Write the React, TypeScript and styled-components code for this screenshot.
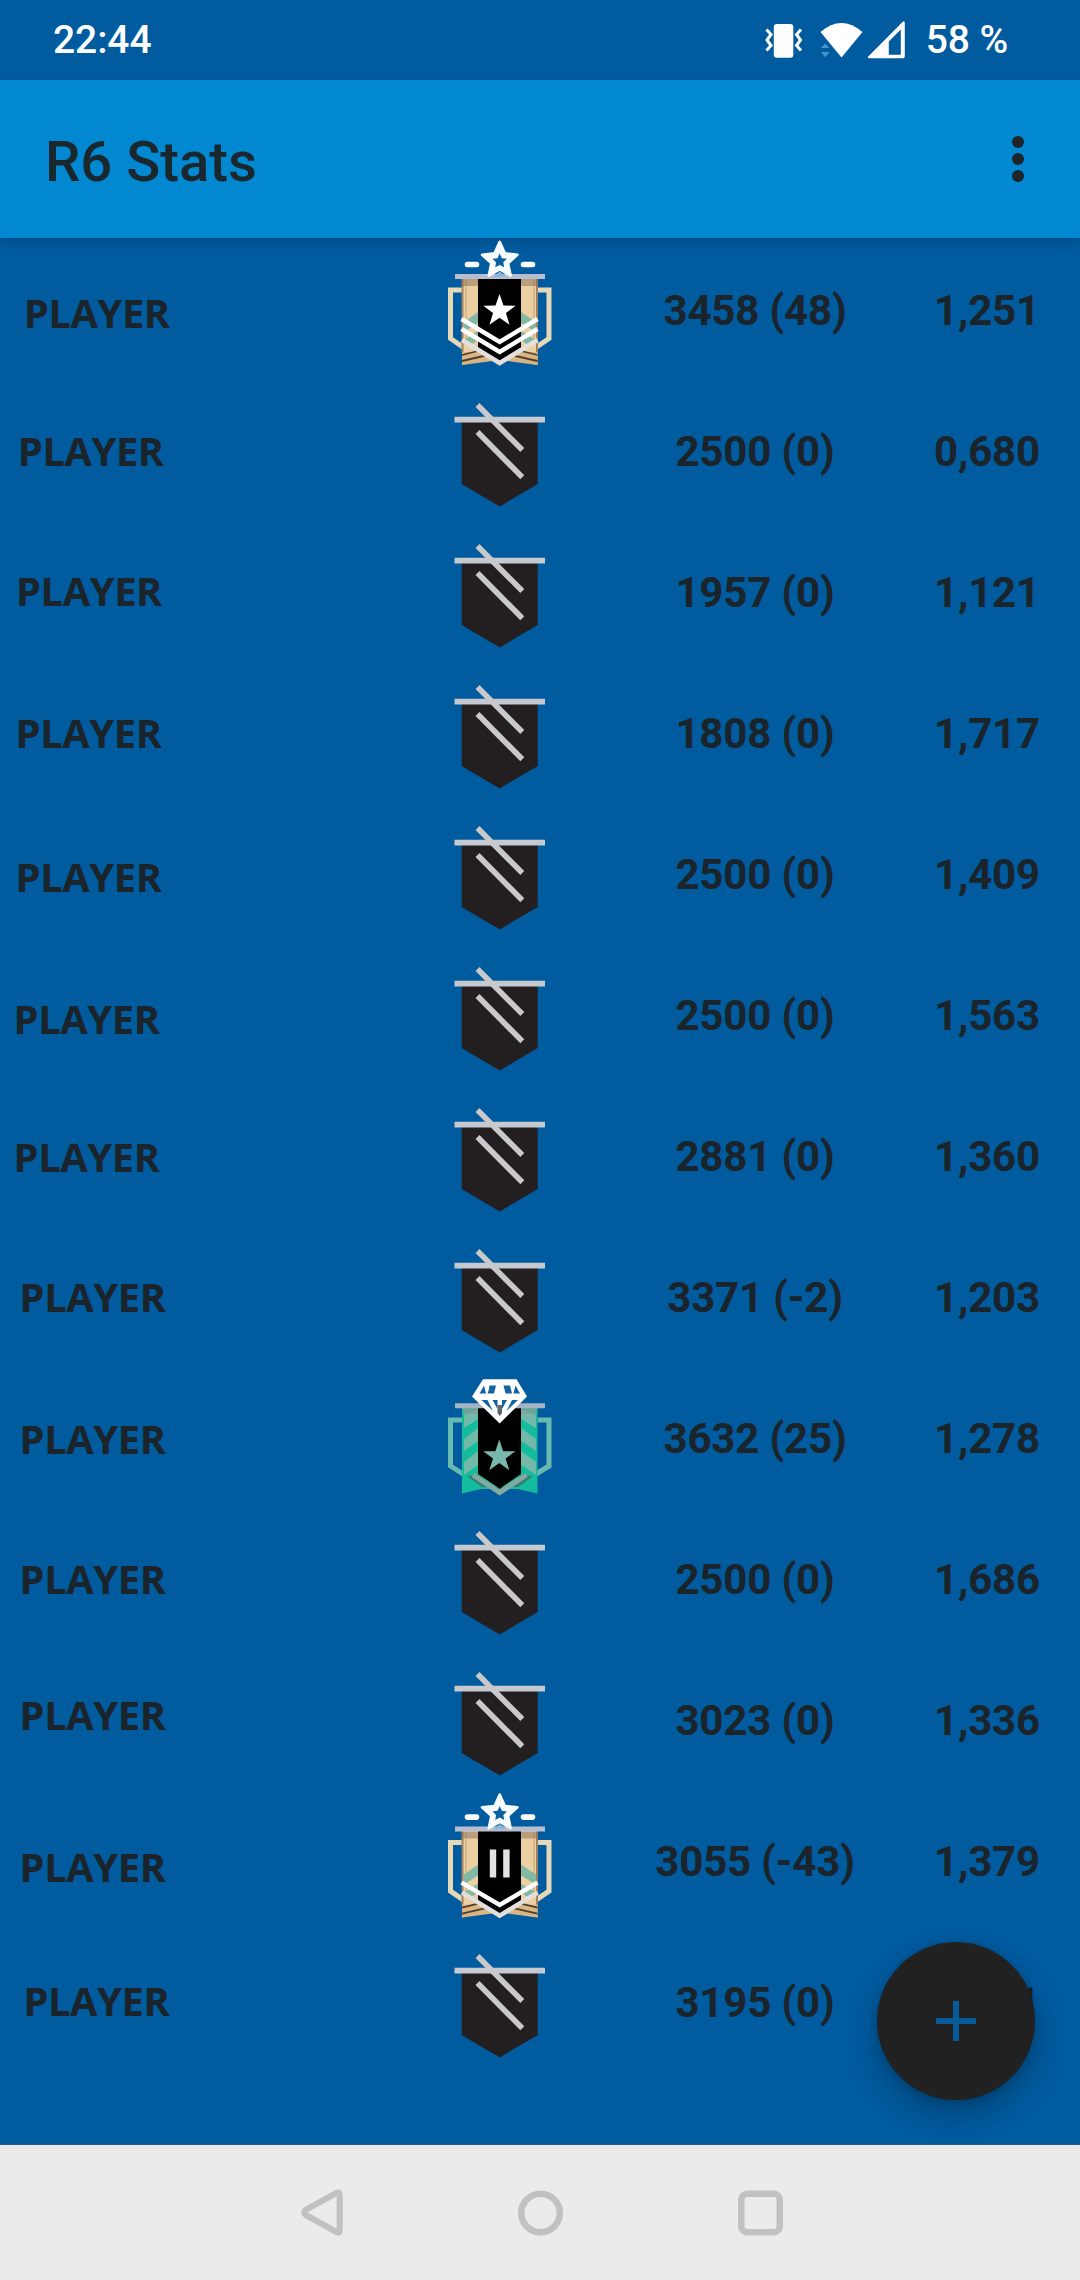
import React from "react";
import styled, { createGlobalStyle } from "styled-components";

const GlobalStyle = createGlobalStyle`
  *, *::before, *::after { box-sizing: border-box; }
  body { margin: 0; background: #005b9f; }
`;

const Screen = styled.div`
  position: relative;
  display: flex;
  flex-direction: column;
  width: 1080px;
  height: 2280px;
  overflow: hidden;
  background: #005b9f;
  font-family: Roboto, "Liberation Sans", sans-serif;
`;

const StatusBar = styled.header`
  display: flex;
  flex: none;
  justify-content: space-between;
  height: 80px;
  padding: 17px 72px 0 53px;
  color: #ffffff;
  font-size: 39px;
  font-weight: 500;
  letter-spacing: -0.1px;
  line-height: 46px;
`;

const StatusIcons = styled.div`
  display: flex;
  align-items: flex-start;
`;

const Battery = styled.span`
  margin-left: 20px;
`;

const AppBar = styled.div`
  position: relative;
  display: flex;
  flex: none;
  align-items: center;
  justify-content: space-between;
  height: 158px;
  padding: 0 50px 0 45px;
  background: #0288d1;
  box-shadow: 0 4px 12px rgba(0, 0, 0, 0.16);
`;

const Title = styled.h1`
  margin: 5px 0 0;
  color: #1a272d;
  font-size: 56.2px;
  font-weight: 500;
  line-height: 66px;
`;

const MenuButton = styled.button`
  display: flex;
  flex-direction: column;
  gap: 5px;
  padding: 0;
  border: 0;
  margin-right: 6px;
  background: none;
`;

const Dot = styled.span`
  width: 12px;
  height: 12px;
  border-radius: 50%;
  background: #1d2529;
`;

const PlayerList = styled.ul`
  flex: 1;
  margin: 0;
  padding: 2px 0 0;
  list-style: none;
`;

const PlayerRow = styled.li`
  display: grid;
  grid-template-columns: 430px 150px 350px 114px;
  height: 141px;
  color: #1a242a;
`;

const Name = styled.span<{ $indent: number; $drop: number }>`
  margin: ${(p) => 46 + p.$drop}px 0 0 ${(p) => p.$indent}px;
  font-family: "Open Sans", "Noto Sans", sans-serif;
  font-size: 39.8px;
  font-weight: 700;
  letter-spacing: -0.4px;
  line-height: 48px;
`;

const Value = styled.span`
  padding-top: 45px;
  font-size: 42px;
  font-weight: 700;
  letter-spacing: -0.15px;
  line-height: 51px;
  text-align: center;
  white-space: nowrap;
`;

const Badge = styled.svg`
  display: block;
  overflow: visible;
  filter: blur(0.7px);
`;

const Fab = styled.button`
  position: absolute;
  left: 877px;
  top: 1942px;
  display: grid;
  place-items: center;
  width: 158px;
  height: 158px;
  padding: 0;
  border: 0;
  border-radius: 50%;
  background: #212121;
  box-shadow: 0 14px 30px rgba(0, 0, 0, 0.26), 0 2px 8px rgba(0, 0, 0, 0.14);
`;

const NavBar = styled.nav`
  position: relative;
  display: flex;
  flex: none;
  align-items: center;
  justify-content: center;
  gap: 175px;
  height: 136px;
  border-top: 1px solid #2c5a80;
  background: #ebebeb;
`;

const starPoints = (cx: number, cy: number, outer: number, inner: number) =>
  Array.from({ length: 10 }, (_, i) => {
    const r = i % 2 ? inner : outer;
    const a = (Math.PI / 5) * i - Math.PI / 2;
    return `${(cx + r * Math.cos(a)).toFixed(2)},${(cy + r * Math.sin(a)).toFixed(2)}`;
  }).join(" ");

const Unranked = () => (
  <Badge width="140" height="141" viewBox="0 0 140 141">
    <path d="M31.7 39H107.7V103L69.7 125.5L31.7 103Z" fill="#231f20" />
    <path d="M24.5 38.6H115" stroke="#c6c9cf" strokeWidth="5.8" />
    <path d="M47.5 24L92.3 69M47.5 51L92.3 96.3" stroke="#c9c8ca" strokeWidth="5.6" fill="none" />
  </Badge>
);

const Champion = ({ tier, shift }: { tier: "star" | "two"; shift: number }) => (
  <Badge width="140" height="141" viewBox="0 0 140 141">
    <g transform={`translate(0 ${shift})`}>
      <path
        d="M32 50H20.5V98.5L46 116M107.5 50H119V98.5L93.5 116"
        fill="none"
        stroke="#e6d9b8"
        strokeWidth="5"
      />
      <path d="M32 38H107.5V125L70 117L32 125Z" fill="#edd0a1" />
      <path d="M32 112L52 112L70 120L32 125ZM107.5 112L88 112L70 120L107.5 125Z" fill="#d9b584" />
      <path d="M32 115L52 110M32 121L58 115M107.5 115L87 110M107.5 121L81 115" stroke="#4f3d2c" strokeWidth="1.8" />
      <path d="M36 39V104M104 39V104" stroke="#c3a47c" strokeWidth="2" opacity="0.5" />
      <path d="M32.5 39V112M107 39V112" stroke="#a18162" strokeWidth="2" />
      <path
        d="M34 82L48 72V83L34 92ZM34 100L48 91V100L41 105ZM106 82L91 72V83L106 92ZM106 100L91 91V100L98 105Z"
        fill="#83b9a4"
      />
      <rect x="32" y="39" width="75.5" height="7" fill="#8a6d54" opacity="0.5" />
      <path d="M48 38H91V108L69.7 121L48 108Z" fill="#000000" />
      <path
        d={tier === "star" ? "M31.5 79L69.7 102L107.5 79M31.5 89L69.7 112L107.5 89" : "M31.5 90L69.7 112.4L107.5 90"}
        fill="none"
        stroke="#ffffff"
        strokeWidth="4.4"
      />
      <path d="M32 100L69.7 123L107.5 100" fill="none" stroke="#e3dfdd" strokeWidth="4.6" />
      <path d="M25 36.5H115" stroke="#b6bfd2" strokeWidth="5" />
      <path d="M37.5 24.5H46.5M93.5 24.5H102.5" stroke="#ffffff" strokeWidth="5.6" strokeLinecap="round" />
      <polygon
        points={starPoints(69.7, 20.5, 18.6, 8.8)}
        fill="#f7fcff"
        stroke="#f7fcff"
        strokeWidth="2.6"
        strokeLinejoin="round"
      />
      <polygon points={starPoints(69.7, 21.2, 7.6, 3.8)} fill="#0a5f9f" />
      <path d="M63 37L69.7 31.5L76.4 37Z" fill="#8fb6d6" />
      {tier === "star" ? (
        <polygon points={starPoints(69.5, 71, 17, 6.8)} fill="#ffffff" />
      ) : (
        <path d="M63 57V84.8M76.4 57V84.8" stroke="#e4e4e4" strokeWidth="6.4" />
      )}
    </g>
  </Badge>
);

const Diamond = () => (
  <Badge width="140" height="141" viewBox="0 0 140 141">
    <path d="M32 52H20.5V98L33 106M107.5 52H119V98L106 106" fill="none" stroke="#68b9b0" strokeWidth="5" />
    <path d="M32 38H107.5V125.5L88 121H51L32 125.5Z" fill="#12bc9c" />
    <path
      d="M34 47L48 41V51L34 60ZM34 71L48 60V73L34 83ZM34 94L48 83V97L34 107ZM106 47L91 41V51L106 60ZM106 71L91 60V73L106 83ZM106 94L91 83V97L106 107Z"
      fill="#72b9aa"
    />
    <path d="M33 38H107V46H33Z" fill="#8a9b98" opacity="0.7" />
    <path d="M37 108L48 107L69.7 123L91 107L103 108L88 119H52Z" fill="#397c6d" />
    <path d="M43 107L69.7 124.5L96.5 107" fill="none" stroke="#83aaa2" strokeWidth="5" />
    <path d="M48 39H91V106L69.7 120.5L48 106Z" fill="#000000" />
    <path d="M25 37.8H115" stroke="#a4b3c4" strokeWidth="5" />
    <polygon points="53,11.3 86.5,11.3 97,28.5 69.7,55.5 42,28.5" fill="#ffffff" />
    <path
      d="M54 17.5L49.5 25.5H56ZM59.5 17.5H66L64 25.5H57.5L59 21ZM73.5 17.5H80L82 25.5H75.5ZM85.5 17.5L90 25.5H83.5ZM51.5 32H57.5L63 43ZM62.5 32H67.5V41ZM72 32H77L72 41ZM82 32H88L76.5 43Z"
      fill="#1463a3"
    />
    <path d="M67.5 37H72V45L69.7 48L67.5 45Z" fill="#60656a" />
    <polygon points={starPoints(69.3, 88.5, 17, 6.6)} fill="#79b9ad" />
  </Badge>
);

type Rank = "unranked" | "champion" | "championTwo" | "diamond";

const RankBadge = ({ rank }: { rank: Rank }) => {
  if (rank === "champion") return <Champion tier="star" shift={0} />;
  if (rank === "championTwo") return <Champion tier="two" shift={1.6} />;
  if (rank === "diamond") return <Diamond />;
  return <Unranked />;
};

type Player = { rank: Rank; mmr: string; kd: string; indent: number; drop: number };

const players: Player[] = [
  { rank: "champion", mmr: "3458 (48)", kd: "1,251", indent: 23.8, drop: 3 },
  { rank: "unranked", mmr: "2500 (0)", kd: "0,680", indent: 17.8, drop: 0 },
  { rank: "unranked", mmr: "1957 (0)", kd: "1,121", indent: 16, drop: -1 },
  { rank: "unranked", mmr: "1808 (0)", kd: "1,717", indent: 15.6, drop: 0 },
  { rank: "unranked", mmr: "2500 (0)", kd: "1,409", indent: 15.6, drop: 3 },
  { rank: "unranked", mmr: "2500 (0)", kd: "1,563", indent: 13.6, drop: 4 },
  { rank: "unranked", mmr: "2881 (0)", kd: "1,360", indent: 13.6, drop: 1 },
  { rank: "unranked", mmr: "3371 (-2)", kd: "1,203", indent: 19.6, drop: 0 },
  { rank: "diamond", mmr: "3632 (25)", kd: "1,278", indent: 19.6, drop: 1 },
  { rank: "unranked", mmr: "2500 (0)", kd: "1,686", indent: 19.6, drop: 0 },
  { rank: "unranked", mmr: "3023 (0)", kd: "1,336", indent: 19.6, drop: -5 },
  { rank: "championTwo", mmr: "3055 (-43)", kd: "1,379", indent: 19.6, drop: 6 },
  { rank: "unranked", mmr: "3195 (0)", kd: "1,101", indent: 23.4, drop: -1 },
];

export default function App() {
  return (
    <>
      <GlobalStyle />
      <Screen>
        <StatusBar>
          <span>22:44</span>
          <StatusIcons>
            <svg width="142" height="46" viewBox="764.5 17 142 46">
              <rect x="774.3" y="24" width="19.5" height="33.8" rx="3" fill="#fff" />
              <path
                d="M767 29.5L771.5 34.5L767.5 40L771.5 45.5L767 50.5M801.5 29.5L797 34.5L801 40L797 45.5L801.5 50.5"
                fill="none"
                stroke="#fff"
                strokeWidth="3"
              />
              <path d="M821 32Q842 14 863 32L842 57.5Z" fill="#fff" />
              <path d="M821.3 48L825.7 43.5L830 48ZM821.3 52L825.7 57.3L830 52Z" fill="#4b93cb" />
              <path
                d="M903.5 21.5Q905.3 20.5 905.3 23V56.5Q905.3 58.3 903.5 58.3H869.5Q867.3 58 869 56.3ZM901.3 29.5L889.3 41.5V54.8H901.3Z"
                fill="#fff"
                fillRule="evenodd"
              />
            </svg>
            <Battery>58 %</Battery>
          </StatusIcons>
        </StatusBar>
        <AppBar>
          <Title>R6 Stats</Title>
          <MenuButton aria-label="More options">
            <Dot />
            <Dot />
            <Dot />
          </MenuButton>
        </AppBar>
        <PlayerList>
          {players.map((p, i) => (
            <PlayerRow key={i}>
              <Name $indent={p.indent} $drop={p.drop}>PLAYER</Name>
              <RankBadge rank={p.rank} />
              <Value>{p.mmr}</Value>
              <Value>{p.kd}</Value>
            </PlayerRow>
          ))}
        </PlayerList>
        <Fab aria-label="Add player">
          <svg width="40" height="40" viewBox="0 0 40 40">
            <path d="M20 0V40M0 20H40" stroke="#075b9a" strokeWidth="6" />
          </svg>
        </Fab>
        <NavBar>
          <svg width="45" height="47" viewBox="-2.5 0 45 47">
            <path
              d="M5.6 20.6L36.3 3.8Q39.2 2.7 39.2 6V41Q39.2 44.3 36.3 43.2L5.6 26.2Q2.2 23.4 5.6 20.6Z"
              fill="none"
              stroke="#c1c1c1"
              strokeWidth="6.2"
            />
          </svg>
          <svg width="45" height="46" viewBox="0 0 45 46">
            <circle cx="22.5" cy="23" r="19.3" fill="none" stroke="#c1c1c1" strokeWidth="6.5" />
          </svg>
          <svg width="45" height="46" viewBox="0 0 45 46">
            <rect x="3.25" y="3.7" width="38.5" height="38.5" rx="6" fill="none" stroke="#c1c1c1" strokeWidth="6.5" />
          </svg>
        </NavBar>
      </Screen>
    </>
  );
}
